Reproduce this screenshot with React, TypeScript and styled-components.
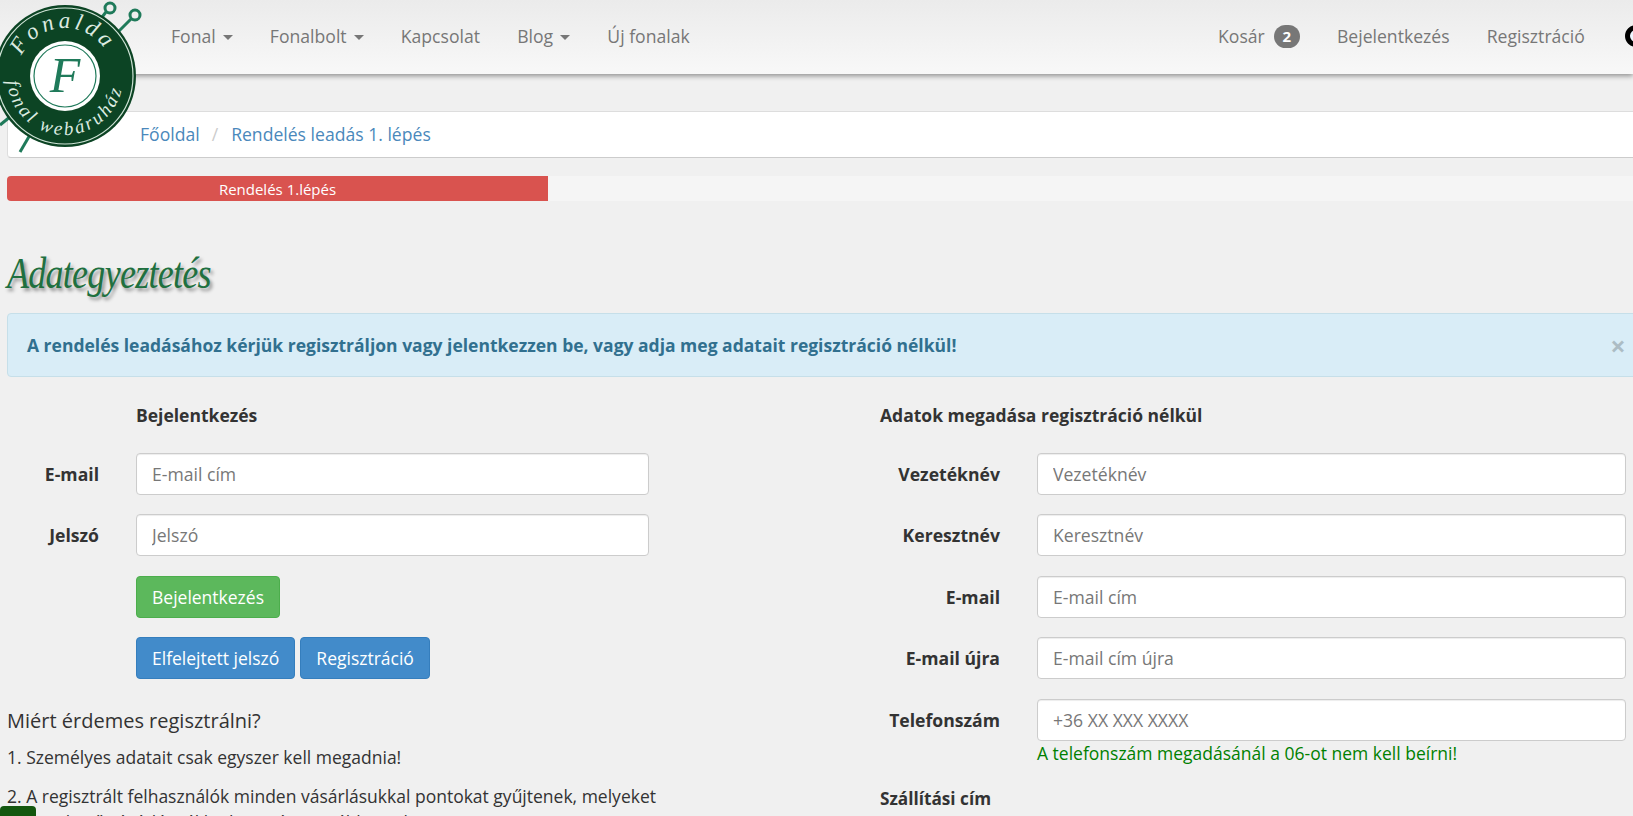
import styled, { createGlobalStyle } from "styled-components";

const GlobalStyle = createGlobalStyle`
  html, body {
    margin: 0;
    padding: 0;
    overflow: hidden;
    height: 100%;
    background: #f0f0f0;
    font-family: "Open Sans", "Liberation Sans", sans-serif;
    font-size: 17.5px;
    color: #333;
  }
  * { box-sizing: border-box; }
`;

const Navbar = styled.nav`
  height: 74px;
  display: flex;
  align-items: center;
  justify-content: space-between;
  padding: 0 0 2px 171px;
  background: linear-gradient(to bottom, #ebebeb, #f8f8f8);
  box-shadow: 0 2px 5px rgba(0, 0, 0, 0.4);
`;

const NavGroup = styled.div`
  display: flex;
  align-items: center;
  gap: 37.2px;
`;

const NavLink = styled.a`
  display: flex;
  align-items: center;
  color: #777;
  font-size: 17.6px;
`;

const Caret = styled.span`
  display: inline-block;
  margin-left: 7px;
  margin-top: 2px;
  border-top: 5px solid #777;
  border-left: 5px solid transparent;
  border-right: 5px solid transparent;
`;

const Badge = styled.span`
  display: inline-block;
  margin-left: 9px;
  min-width: 26px;
  height: 23px;
  line-height: 23px;
  text-align: center;
  border-radius: 12px;
  background: #777;
  color: #fff;
  font-size: 15px;
  font-weight: 700;
`;

const Ring = styled.span`
  display: block;
  width: 22px;
  height: 22px;
  margin-right: -14px;
  margin-left: 3px;
  border: 5px solid #000;
  border-radius: 50%;
  background: #eef6ff;
`;

const Logo = styled.svg`
  position: absolute;
  left: -8px;
  top: 0;
  width: 160px;
  height: 156px;
`;

const Content = styled.main`
  margin-left: 7px;
  width: 1650px;
`;

const Breadcrumb = styled.div`
  margin-top: 37px;
  height: 47px;
  display: flex;
  align-items: center;
  padding: 0 0 2px 132px;
  background: #fff;
  border: 1px solid #ddd;
  border-bottom-color: #ccc;
  border-radius: 4px;
  font-size: 17.6px;
`;

const Crumb = styled.a`
  color: #4a88bb;
`;

const CrumbSep = styled.span`
  color: #ccc;
  padding: 0 13px 0 12px;
`;

const Progress = styled.div`
  margin-top: 18px;
  height: 25px;
  background: #f5f5f5;
  border-radius: 4px;
`;

const ProgressBar = styled.div`
  height: 100%;
  display: flex;
  align-items: center;
  justify-content: center;
  background: #d9534f;
  color: #fff;
  font-size: 15px;
  border-radius: 4px 0 0 4px;
`;

const Heading = styled.h1`
  margin: 0;
  height: 112px;
  padding-top: 43px;
  font-family: "Liberation Serif", serif;
  font-style: italic;
  font-weight: 400;
  font-size: 45px;
  line-height: 58px;
  letter-spacing: -0.9px;
  color: #20703f;
  text-shadow: 3px 3px 4px rgba(0, 0, 0, 0.4);
  transform: scaleX(0.8);
  transform-origin: left center;
`;

const Alert = styled.div`
  height: 64px;
  display: flex;
  align-items: center;
  justify-content: space-between;
  padding: 0 22px 0 19px;
  background: #d9edf7;
  border: 1px solid #c6dfe9;
  border-radius: 4px;
  color: #31708f;
  font-weight: 700;
`;

const AlertText = styled.span``;

const Close = styled.span`
  width: 22px;
  margin-right: 5px;
  font-size: 27px;
  font-weight: 700;
  color: #000;
  opacity: 0.2;
  text-align: center;
`;

const Columns = styled.div`
  display: grid;
  grid-template-columns: 642px 746px;
  column-gap: 231px;
`;

const Column = styled.section``;

const ColumnTitle = styled.h4<{ $indent?: number }>`
  margin: 25px 0 25px ${(p) => p.$indent ?? 0}px;
  line-height: 26px;
  font-size: 17.5px;
  font-weight: 700;
  color: #333;
`;

const FormRow = styled.div<{ $label: number }>`
  display: grid;
  grid-template-columns: ${(p) => p.$label}px 1fr;
  column-gap: 37px;
  align-items: center;
  margin-bottom: 19.4px;
`;

const Label = styled.label`
  text-align: right;
  font-size: 17.6px;
  font-weight: 700;
`;

const Input = styled.input`
  width: 100%;
  height: 42px;
  padding: 0 15px;
  background: #fff;
  border: 1px solid #ccc;
  border-radius: 4px;
  box-shadow: inset 0 1px 1px rgba(0, 0, 0, 0.075);
  font-family: inherit;
  font-size: 17.6px;
  &::placeholder {
    color: #777;
    opacity: 1;
  }
`;

const ButtonRow = styled.div`
  display: flex;
  gap: 5px;
  margin: 0 0 19.4px 129px;
`;

const Button = styled.button<{ $kind: "success" | "primary" }>`
  height: 42px;
  padding: 0 15px;
  border-radius: 4px;
  border: 1px solid ${(p) => (p.$kind === "success" ? "#4cae4c" : "#357ebd")};
  background: ${(p) => (p.$kind === "success" ? "#5cb85c" : "#428bca")};
  color: #fff;
  font-family: inherit;
  font-size: 17.5px;
`;

const Why = styled.h4`
  margin: 29px 0 10px;
  font-size: 20px;
  line-height: 26px;
  font-weight: 400;
`;

const Para = styled.p`
  margin: 0 -20px 13px 0;
  font-size: 17.5px;
  line-height: 26px;
`;

const Hint = styled.div`
  margin: -19px 0 0 157px;
  line-height: 24px;
  font-size: 17.5px;
  color: #008000;
`;

const ShippingTitle = styled.h4`
  margin: 21px 0 0;
  line-height: 26px;
  font-size: 17.2px;
  font-weight: 700;
`;

const TopButton = styled.div`
  position: fixed;
  left: 0;
  bottom: -20px;
  width: 36px;
  height: 30px;
  background: #14570f;
  border-radius: 4px;
`;

const loginFields = [
  { label: "E-mail", placeholder: "E-mail cím" },
  { label: "Jelszó", placeholder: "Jelszó" },
];

const guestFields = [
  { label: "Vezetéknév", placeholder: "Vezetéknév" },
  { label: "Keresztnév", placeholder: "Keresztnév" },
  { label: "E-mail", placeholder: "E-mail cím" },
  { label: "E-mail újra", placeholder: "E-mail cím újra" },
  { label: "Telefonszám", placeholder: "+36 XX XXX XXXX" },
];

function LogoMark() {
  return (
    <Logo viewBox="0 0 160 156">
      <g stroke="#1f7a5a" strokeWidth="3" fill="none">
        <circle cx="118" cy="8" r="5" />
        <circle cx="143" cy="15" r="5" />
        <path d="M114 12 L100 30" />
        <path d="M139 19 L120 38" />
        <path d="M28 152 L42 128" />
        <path d="M8 125 L24 112" />
      </g>
      <circle cx="73" cy="76" r="71" fill="#0c4424" />
      <circle cx="73" cy="76" r="68" fill="none" stroke="#cfe3d6" strokeWidth="1.2" />
      <circle cx="73" cy="76" r="35" fill="#fff" />
      <circle cx="73" cy="76" r="31" fill="none" stroke="#1f7a5a" strokeWidth="1.2" />
      <defs>
        <path id="logoTop" d="M29.5 55.7 A48 48 0 0 1 112.8 49.2" />
        <path id="logoBottom" d="M15 81 A58 58 0 0 0 130.3 85.2" />
      </defs>
      <text fontFamily="Liberation Serif, serif" fontStyle="italic" fontSize="23" fill="#dcebe1">
        <textPath href="#logoTop" textLength="100">Fonalda</textPath>
      </text>
      <text fontFamily="Liberation Serif, serif" fontStyle="italic" fontSize="19" fill="#dcebe1">
        <textPath href="#logoBottom" textLength="165">fonal webáruház</textPath>
      </text>
      <text x="73" y="92" textAnchor="middle" fontFamily="Liberation Serif, serif" fontStyle="italic" fontSize="50" fill="#1f7a5a">F</text>
    </Logo>
  );
}

export default function App() {
  return (
    <>
      <GlobalStyle />
      <Navbar>
        <NavGroup>
          <NavLink>Fonal<Caret /></NavLink>
          <NavLink>Fonalbolt<Caret /></NavLink>
          <NavLink>Kapcsolat</NavLink>
          <NavLink>Blog<Caret /></NavLink>
          <NavLink>Új fonalak</NavLink>
        </NavGroup>
        <NavGroup>
          <NavLink>Kosár<Badge>2</Badge></NavLink>
          <NavLink>Bejelentkezés</NavLink>
          <NavLink>Regisztráció</NavLink>
          <Ring />
        </NavGroup>
      </Navbar>
      <LogoMark />
      <Content>
        <Breadcrumb>
          <Crumb>Főoldal</Crumb>
          <CrumbSep>/</CrumbSep>
          <Crumb>Rendelés leadás 1. lépés</Crumb>
        </Breadcrumb>
        <Progress>
          <ProgressBar style={{ width: 541 }}>Rendelés 1.lépés</ProgressBar>
        </Progress>
        <Heading>Adategyeztetés</Heading>
        <Alert>
          <AlertText>A rendelés leadásához kérjük regisztráljon vagy jelentkezzen be, vagy adja meg adatait regisztráció nélkül!</AlertText>
          <Close>×</Close>
        </Alert>
        <Columns>
          <Column>
            <ColumnTitle $indent={129}>Bejelentkezés</ColumnTitle>
            {loginFields.map((f) => (
              <FormRow $label={92} key={f.label}>
                <Label>{f.label}</Label>
                <Input placeholder={f.placeholder} />
              </FormRow>
            ))}
            <ButtonRow>
              <Button $kind="success">Bejelentkezés</Button>
            </ButtonRow>
            <ButtonRow>
              <Button $kind="primary">Elfelejtett jelszó</Button>
              <Button $kind="primary">Regisztráció</Button>
            </ButtonRow>
            <Why>Miért érdemes regisztrálni?</Why>
            <Para>1. Személyes adatait csak egyszer kell megadnia!</Para>
            <Para>2. A regisztrált felhasználók minden vásárlásukkal pontokat gyűjtenek, melyeket a következő vásárlásnál kedvezményre válthatnak!</Para>
          </Column>
          <Column>
            <ColumnTitle>Adatok megadása regisztráció nélkül</ColumnTitle>
            {guestFields.map((f) => (
              <FormRow $label={120} key={f.label}>
                <Label>{f.label}</Label>
                <Input placeholder={f.placeholder} />
              </FormRow>
            ))}
            <Hint>A telefonszám megadásánál a 06-ot nem kell beírni!</Hint>
            <ShippingTitle>Szállítási cím</ShippingTitle>
          </Column>
        </Columns>
      </Content>
      <TopButton />
    </>
  );
}
